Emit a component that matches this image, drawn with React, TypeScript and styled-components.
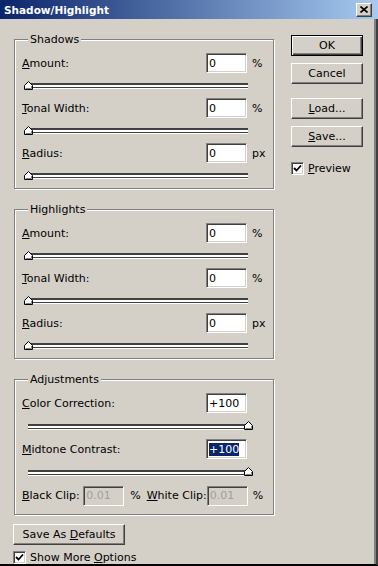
import React from 'react';
import styled, { createGlobalStyle } from 'styled-components';

const Global = createGlobalStyle`
  html, body { margin: 0; padding: 0; background: #d4d0c8; }
  body {
    font-family: "DejaVu Sans", Tahoma, sans-serif;
    font-size: 11px;
    color: #000;
  }
`;

const Window = styled.div`
  width: 378px;
  height: 566px;
  display: flex;
  flex-direction: column;
  background: #d4d0c8;
  overflow: hidden;
`;

const TitleBar = styled.div`
  height: 19px;
  flex: none;
  display: flex;
  align-items: center;
  padding-left: 4px;
  background: linear-gradient(to right, #0a246a, #a6caf0);
  color: #fff;
  font-weight: bold;
  font-size: 10.5px;
`;

const Title = styled.span`
  flex: 1;
`;

const CloseBox = styled.div`
  width: 16px;
  height: 14px;
  margin-right: 6px;
  box-sizing: border-box;
  background: #d4d0c8;
  border: 1px solid;
  border-color: #fff #404040 #404040 #fff;
  box-shadow: inset -1px -1px 0 #808080;
  display: flex;
  align-items: center;
  justify-content: center;
`;

const Body = styled.div`
  flex: 1;
  min-height: 0;
  display: flex;
  gap: 16px;
  padding: 14px 0 0 13px;
  border-right: 2px solid #404040;
  border-bottom: 2px solid #000;
  box-shadow: inset -2px 0 0 #808080;
`;

const LeftCol = styled.div`
  width: 262px;
  display: flex;
  flex-direction: column;
  align-items: flex-start;
`;

const Group = styled.fieldset<{ $bottom?: number; $mb?: number }>`
  width: 260px;
  box-sizing: border-box;
  margin: 0 0 ${p => p.$mb ?? 14}px 1px;
  padding: 7px 6px ${p => p.$bottom ?? 0}px 7px;
  border: 1px solid #808080;
  box-shadow: 1px 1px 0 #fff, inset 1px 1px 0 #fff;
  min-width: 0;
`;

const Legend = styled.legend`
  margin-left: 6px;
  padding: 0 2px;
  line-height: 13px;
  background: #d4d0c8;
`;

const Row = styled.div`
  height: 20px;
  display: flex;
  align-items: center;
`;

const Label = styled.span`
  flex: 1;
  white-space: nowrap;
`;

const U = styled.span`
  text-decoration: underline;
`;

const Field = styled.div<{ $disabled?: boolean }>`
  width: 41px;
  height: 20px;
  box-sizing: border-box;
  flex: none;
  border: 1px solid;
  border-color: #808080 #fff #fff #808080;
  box-shadow: inset 1px 1px 0 #404040, inset -1px -1px 0 #d4d0c8;
  background: ${p => (p.$disabled ? '#d4d0c8' : '#fff')};
  color: ${p => (p.$disabled ? '#a0a0a0' : '#000')};
  padding: 0 2px;
  display: flex;
  align-items: center;
  white-space: nowrap;
`;

const Selected = styled.span`
  background: #0a246a;
  color: #fff;
`;

const Unit = styled.span`
  width: 15px;
  padding-left: 5px;
  flex: none;
`;

const Slider = styled.div<{ $h: number }>`
  position: relative;
  height: ${p => p.$h}px;
  width: 224px;
  margin-left: 2px;
  display: flex;
  align-items: center;
`;

const Track = styled.div`
  flex: 1;
  height: 5px;
  margin-left: 4px;
  box-sizing: border-box;
  border-top: 2px solid #404040;
  border-bottom: 1px solid #404040;
  background: #fff;
  box-shadow: 0 1px 0 #fff;
`;

const Thumb = styled.svg<{ $end?: boolean }>`
  position: absolute;
  top: calc(50% - 5px);
  ${p => (p.$end ? 'right: -5px;' : 'left: 0;')}
`;

const ClipRow = styled(Row)`
  height: 21px;
`;

const ClipLabel = styled.span`
  white-space: nowrap;
`;

const ClipUnit = styled.span`
  margin: 0 6px 0 6px;
`;

const PushField = styled(Field)`
  margin-left: auto;
`;

const Button = styled.button<{ $default?: boolean; $w?: number }>`
  width: ${p => p.$w ?? 72}px;
  height: 21px;
  flex: none;
  box-sizing: border-box;
  padding: 0;
  font: inherit;
  color: #000;
  background: #d4d0c8;
  border: 1px solid;
  border-color: ${p => (p.$default ? '#000' : '#fff #404040 #404040 #fff')};
  box-shadow: ${p =>
    p.$default
      ? 'inset 1px 1px 0 #fff, inset -1px -1px 0 #404040, inset -2px -2px 0 #808080'
      : 'inset -1px -1px 0 #808080'};
`;

const RightCol = styled.div`
  width: 72px;
  padding-top: 2px;
  display: flex;
  flex-direction: column;
`;

const Gap = styled.div<{ $h: number }>`
  height: ${p => p.$h}px;
  flex: none;
`;

const CheckRow = styled.div`
  display: flex;
  align-items: center;
  gap: 4px;
  height: 13px;
`;

const Box = styled.div`
  width: 13px;
  height: 13px;
  box-sizing: border-box;
  border: 1px solid;
  border-color: #808080 #fff #fff #808080;
  box-shadow: inset 1px 1px 0 #404040, inset -1px -1px 0 #d4d0c8;
  background: #fff;
  display: flex;
  align-items: center;
  justify-content: center;
`;

function Check() {
  return (
    <Box>
      <svg width="9" height="9" viewBox="0 0 9 9">
        <path d="M1 4 L3.5 6.5 L8 1.5" fill="none" stroke="#000" strokeWidth="1.8" />
      </svg>
    </Box>
  );
}

function Knob({ end }: { end?: boolean }) {
  return (
    <Thumb $end={end} width="9" height="9" viewBox="0 0 9 9">
      <path d="M0.5 8.5 V4.5 L4.5 0.5 L8.5 4.5 V8.5 Z" fill="#fff" stroke="#000" />
      <path d="M1.5 7.5 H7.5 V4.9" fill="none" stroke="#808080" />
    </Thumb>
  );
}

type Item = { key: string; rest: string; value: string; unit: string };

const shadowItems: Item[] = [
  { key: 'A', rest: 'mount:', value: '0', unit: '%' },
  { key: 'T', rest: 'onal Width:', value: '0', unit: '%' },
  { key: 'R', rest: 'adius:', value: '0', unit: 'px' },
];

function Section({ title, items }: { title: string; items: Item[] }) {
  return (
    <Group>
      <Legend>{title}</Legend>
      {items.map(it => (
        <React.Fragment key={it.key + it.rest}>
          <Row>
            <Label>
              <U>{it.key}</U>
              {it.rest}
            </Label>
            <Field>{it.value}</Field>
            <Unit>{it.unit}</Unit>
          </Row>
          <Slider $h={25}>
            <Track />
            <Knob />
          </Slider>
        </React.Fragment>
      ))}
    </Group>
  );
}

export default function App() {
  return (
    <>
      <Global />
      <Window>
        <TitleBar>
          <Title>Shadow/Highlight</Title>
          <CloseBox>
            <svg width="8" height="7" viewBox="0 0 8 7">
              <path d="M0.5 0.5 L7.5 6.5 M7.5 0.5 L0.5 6.5" stroke="#000" strokeWidth="1.6" />
            </svg>
          </CloseBox>
        </TitleBar>
        <Body>
          <LeftCol>
            <Section title="Shadows" items={shadowItems} />
            <Section title="Highlights" items={shadowItems} />
            <Group $bottom={8} $mb={9}>
              <Legend>Adjustments</Legend>
              <Row>
                <Label>
                  <U>C</U>olor Correction:
                </Label>
                <Field>+100</Field>
                <Unit />
              </Row>
              <Slider $h={26}>
                <Track />
                <Knob end />
              </Slider>
              <Row>
                <Label>
                  <U>M</U>idtone Contrast:
                </Label>
                <Field>
                  <Selected>+100</Selected>
                </Field>
                <Unit />
              </Row>
              <Slider $h={26}>
                <Track />
                <Knob end />
              </Slider>
              <ClipRow>
                <ClipLabel>
                  <U>B</U>lack Clip:&nbsp;
                </ClipLabel>
                <Field $disabled>0.01</Field>
                <ClipUnit>%</ClipUnit>
                <ClipLabel>
                  <U>W</U>hite Clip:
                </ClipLabel>
                <PushField $disabled>0.01</PushField>
                <Unit>%</Unit>
              </ClipRow>
            </Group>
            <Button $w={112}>
              Save As <U>D</U>efaults
            </Button>
            <Gap $h={6} />
            <CheckRow>
              <Check />
              <span>
                Show More <U>O</U>ptions
              </span>
            </CheckRow>
          </LeftCol>
          <RightCol>
            <Button $default>OK</Button>
            <Gap $h={7} />
            <Button>Cancel</Button>
            <Gap $h={14} />
            <Button>
              <U>L</U>oad...
            </Button>
            <Gap $h={7} />
            <Button>
              <U>S</U>ave...
            </Button>
            <Gap $h={15} />
            <CheckRow>
              <Check />
              <span>
                <U>P</U>review
              </span>
            </CheckRow>
          </RightCol>
        </Body>
      </Window>
    </>
  );
}
